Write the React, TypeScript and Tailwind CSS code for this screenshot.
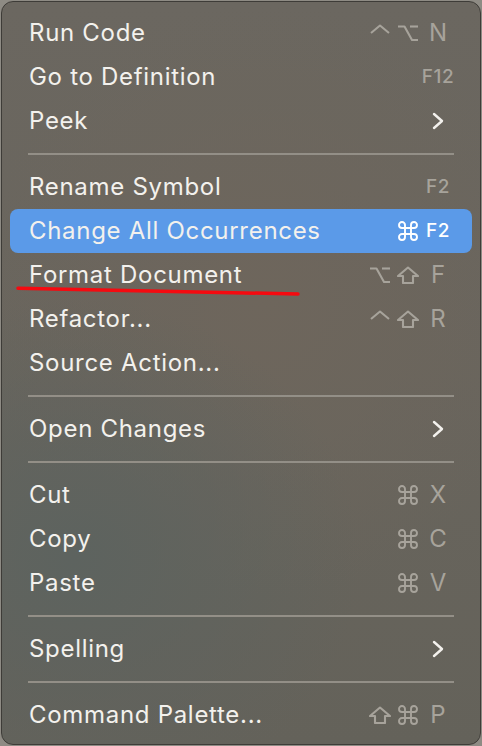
import { ReactNode } from 'react';

type Key = 'ctrl' | 'opt' | 'shift' | 'cmd';

function Glyph({ k }: { k: Key }) {
  if (k === 'cmd') {
    return (
      <svg width="20" height="20" viewBox="2 2 20 20" fill="none" stroke="currentColor" strokeWidth="1.9" strokeLinecap="round" strokeLinejoin="round">
        <path d="M15 6v12a3 3 0 1 0 3-3H6a3 3 0 1 0 3 3V6a3 3 0 1 0-3 3h12a3 3 0 1 0-3-3" />
      </svg>
    );
  }
  return (
    <svg width="22" height="18" viewBox="0 0 22 18" fill="none" stroke="currentColor" strokeWidth="2.1" strokeLinejoin="round">
      {k === 'ctrl' && <polyline points="2,9 11,1.5 20,9" />}
      {k === 'opt' && (
        <>
          <path d="M1 2.5H7.5L15 16H21" />
          <path d="M13 2.5H21" />
        </>
      )}
      {k === 'shift' && <path d="M11 1.5L21 10H16V17H6V10H1Z" />}
    </svg>
  );
}

function Chevron() {
  return (
    <svg width="12" height="18" viewBox="0 0 12 18" fill="none" stroke="currentColor" strokeWidth="2.4" strokeLinecap="round" strokeLinejoin="round">
      <polyline points="2,2 10,9 2,16" />
    </svg>
  );
}

type Item = {
  label: string;
  mods?: Key[];
  keyName?: string;
  fkey?: string;
  submenu?: boolean;
  active?: boolean;
};

const groups: Item[][] = [
  [
    { label: 'Run Code', mods: ['ctrl', 'opt'], keyName: 'N' },
    { label: 'Go to Definition', fkey: 'F12' },
    { label: 'Peek', submenu: true },
  ],
  [
    { label: 'Rename Symbol', fkey: 'F2' },
    { label: 'Change All Occurrences', mods: ['cmd'], fkey: 'F2', active: true },
    { label: 'Format Document', mods: ['opt', 'shift'], keyName: 'F' },
    { label: 'Refactor...', mods: ['ctrl', 'shift'], keyName: 'R' },
    { label: 'Source Action...' },
  ],
  [{ label: 'Open Changes', submenu: true }],
  [
    { label: 'Cut', mods: ['cmd'], keyName: 'X' },
    { label: 'Copy', mods: ['cmd'], keyName: 'C' },
    { label: 'Paste', mods: ['cmd'], keyName: 'V' },
  ],
  [{ label: 'Spelling', submenu: true }],
  [{ label: 'Command Palette...', mods: ['shift', 'cmd'], keyName: 'P' }],
];

function Shortcut({ item }: { item: Item }) {
  const mods = item.mods ?? [];
  const slots: (Key | null)[] = mods.length === 2 ? mods : [null, mods[0] ?? null];
  let last: ReactNode = null;
  if (item.submenu) last = <span className="text-[#f3f1ed]"><Chevron /></span>;
  else if (item.fkey) last = <span className="text-[19px] font-medium tracking-[0.6px]">{item.fkey}</span>;
  else if (item.keyName) last = <span className="text-[24px]">{item.keyName}</span>;

  return (
    <div className={`flex items-center ${item.active ? 'text-white' : 'text-[#a7a39b]'}`}>
      <div className="w-[28px] flex justify-center">{slots[0] && <Glyph k={slots[0]} />}</div>
      <div className="w-[28px] flex justify-center">{slots[1] && <Glyph k={slots[1]} />}</div>
      <div className="w-[32px] flex justify-center">{last}</div>
    </div>
  );
}

function Row({ item }: { item: Item }) {
  return (
    <div
      className={`h-[44px] flex items-center justify-between pl-[19px] pr-[18px] rounded-[8px] ${
        item.active ? 'bg-[#5b9ae8]' : ''
      }`}
    >
      <span className="text-[24px] tracking-[0.7px] text-[#f3f1ed] leading-none">{item.label}</span>
      <Shortcut item={item} />
    </div>
  );
}

export default function App() {
  return (
    <div className="relative w-[482px] h-[746px] p-px bg-[#8e8b84] font-['Inter','Liberation_Sans',sans-serif]">
      <div className="h-full rounded-[12px] border border-[#3e3c38] pt-[9px] pb-[7px] px-[8px] [background-image:radial-gradient(ellipse_60%_35%_at_15%_75%,#5d635f_0%,rgba(93,99,95,0)_100%),radial-gradient(ellipse_60%_40%_at_55%_40%,#6e665c_0%,rgba(110,102,92,0)_100%),linear-gradient(180deg,#6b6760_0%,#69655d_50%,#64625a_100%)]">
        {groups.map((group, gi) => (
          <div key={gi}>
            {gi > 0 && (
              <div className="h-[22px] flex items-center px-[18px]">
                <div className="h-[1.5px] w-full bg-[#938f87]" />
              </div>
            )}
            {group.map((item) => (
              <Row key={item.label} item={item} />
            ))}
          </div>
        ))}
      </div>
      <svg className="absolute left-0 top-0 pointer-events-none" width="482" height="746">
        <path d="M18 288.3 Q150 291.2 298 294" stroke="#f50a10" strokeWidth="3.5" fill="none" strokeLinecap="round" />
      </svg>
    </div>
  );
}
